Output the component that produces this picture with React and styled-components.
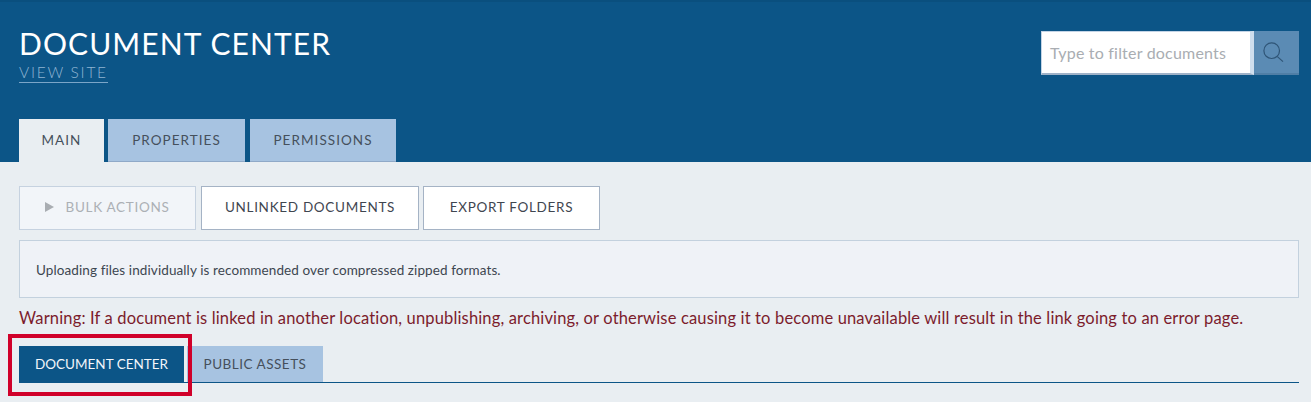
import styled, { createGlobalStyle } from "styled-components";

const Global = createGlobalStyle`
  html, body {
    margin: 0;
    padding: 0;
    background: #e9eef2;
    font-family: "Lato", "Open Sans", sans-serif;
    overflow: hidden;
  }
  * { box-sizing: border-box; }
`;

const Page = styled.div`
  width: 1311px;
  height: 402px;
  overflow: hidden;
`;

const Header = styled.header`
  height: 162px;
  background: #0c5587;
  border-top: 2px solid #0a4f7e;
  padding: 0 12px 0 19px;
  display: flex;
  flex-direction: column;
  justify-content: space-between;
`;

const HeaderTop = styled.div`
  display: flex;
  justify-content: space-between;
  align-items: flex-start;
  padding-top: 29px;
`;

const TitleBlock = styled.div`
  display: flex;
  flex-direction: column;
  align-items: flex-start;
  margin-top: -2px;
`;

const Title = styled.h1`
  margin: 0;
  font-size: 30px;
  line-height: 29px;
  font-weight: 400;
  letter-spacing: 1.1px;
  color: #fff;
`;

const ViewSite = styled.a`
  margin-top: 4px;
  font-size: 15.5px;
  line-height: 20px;
  font-weight: 300;
  letter-spacing: 1.75px;
  color: #8fb4d2;
  border-bottom: 1px solid #7ba5c8;
`;

const Search = styled.div`
  display: flex;
  height: 44px;
`;

const SearchInput = styled.div`
  width: 213px;
  height: 44px;
  padding-left: 8px;
  background: #fff;
  border: 1px solid #c3d4e6;
  border-bottom: 2px solid #9fb2c8;
  border-right: 4px solid #cfdeee;
  font-size: 16px;
  letter-spacing: 0.2px;
  line-height: 42px;
  color: #a9adb2;
`;

const SearchButton = styled.div`
  width: 45px;
  height: 44px;
  padding-right: 6px;
  background: #5b8bb4;
  border-bottom: 2px solid #4f7ea6;
  display: flex;
  align-items: center;
  justify-content: center;
`;

const Tabs = styled.nav`
  display: flex;
`;

const Tab = styled.div`
  width: ${(p) => p.$w}px;
  margin-right: ${(p) => p.$gap}px;
  height: 43px;
  padding-bottom: 1px;
  display: flex;
  align-items: center;
  justify-content: center;
  font-size: 13.5px;
  letter-spacing: 1.05px;
  color: #45505c;
  background: ${(p) => (p.$active ? "#e9eef2" : "#a7c3e1")};
  border-bottom: ${(p) => (p.$active ? "none" : "1px solid #8fa9c8")};
`;

const Main = styled.main`
  padding: 24px 12px 0 19px;
`;

const Actions = styled.div`
  display: flex;
  gap: 4px;
`;

const ActionButton = styled.div`
  width: ${(p) => p.$w}px;
  margin-right: ${(p) => p.$gap || 0}px;
  height: 44px;
  padding-bottom: 2px;
  display: flex;
  align-items: center;
  justify-content: center;
  gap: 11px;
  font-size: 13.5px;
  letter-spacing: 0.7px;
  color: ${(p) => (p.$disabled ? "#acb0b5" : "#3f4650")};
  background: ${(p) => (p.$disabled ? "#f2f5f9" : "#fff")};
  border: 1px solid ${(p) => (p.$disabled ? "#c6d2e0" : "#a5b3c5")};
`;

const Arrow = styled.span`
  width: 0;
  height: 0;
  border-left: 9px solid #a9adb2;
  border-top: 5px solid transparent;
  border-bottom: 5px solid transparent;
`;

const Notice = styled.div`
  margin-top: 10px;
  height: 58px;
  padding: 1px 0 0 16px;
  display: flex;
  align-items: center;
  font-size: 13.5px;
  letter-spacing: 0.1px;
  color: #3d4650;
  background: #eff2f7;
  border: 1px solid #c3d1de;
`;

const Warning = styled.p`
  margin: 11px 0 0;
  font-size: 16.5px;
  line-height: 19px;
  letter-spacing: 0.155px;
  color: #7c1c2c;
  white-space: nowrap;
`;

const SubTabs = styled.div`
  position: relative;
  margin-top: 18px;
  height: 37px;
  display: flex;
  border-bottom: 1px solid #0c5587;
`;

const SubTab = styled.div`
  width: ${(p) => p.$w}px;
  margin-right: ${(p) => p.$gap || 0}px;
  height: 36px;
  display: flex;
  align-items: center;
  justify-content: center;
  font-size: 13.5px;
  letter-spacing: ${(p) => (p.$active ? "0" : "0.5px")};
  color: ${(p) => (p.$active ? "#f2f6fa" : "#45505c")};
  background: ${(p) => (p.$active ? "#0c5587" : "#a7c3e1")};
`;

const Highlight = styled.div`
  position: absolute;
  left: -11px;
  top: -12px;
  width: 184px;
  height: 62px;
  border: 4px solid #d0002a;
  pointer-events: none;
`;

export default function App() {
  return (
    <Page>
      <Global />
      <Header>
        <HeaderTop>
          <TitleBlock>
            <Title>DOCUMENT CENTER</Title>
            <ViewSite>VIEW SITE</ViewSite>
          </TitleBlock>
          <Search>
            <SearchInput>Type to filter documents</SearchInput>
            <SearchButton>
              <svg width="21" height="21" viewBox="0 0 21 21" fill="none" stroke="#2f5577" strokeWidth="1.2">
                <circle cx="8.7" cy="8.7" r="7.8" />
                <path d="M14.4 14.6 L20 19.6" />
              </svg>
            </SearchButton>
          </Search>
        </HeaderTop>
        <Tabs>
          <Tab $active $w={85} $gap={4}>MAIN</Tab>
          <Tab $w={137} $gap={5}>PROPERTIES</Tab>
          <Tab $w={146} $gap={0}>PERMISSIONS</Tab>
        </Tabs>
      </Header>
      <Main>
        <Actions>
          <ActionButton $disabled $w={177} $gap={1}>
            <Arrow />
            BULK ACTIONS
          </ActionButton>
          <ActionButton $w={218}>UNLINKED DOCUMENTS</ActionButton>
          <ActionButton $w={177}>EXPORT FOLDERS</ActionButton>
        </Actions>
        <Notice>Uploading files individually is recommended over compressed zipped formats.</Notice>
        <Warning>
          Warning: If a document is linked in another location, unpublishing, archiving, or otherwise causing it to become unavailable will result in the link going to an error page.
        </Warning>
        <SubTabs>
          <SubTab $active $w={165} $gap={3}>DOCUMENT CENTER</SubTab>
          <SubTab $w={136}>PUBLIC ASSETS</SubTab>
          <Highlight />
        </SubTabs>
      </Main>
    </Page>
  );
}
